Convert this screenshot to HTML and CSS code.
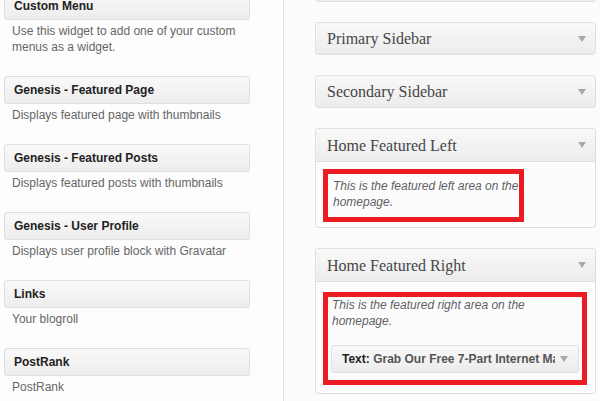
FILE: index.html
```html
<!DOCTYPE html>
<html>
<head>
<meta charset="utf-8">
<link rel="stylesheet" href="styles.css">
</head>
<body>
<div class="page">
  <div class="available">
    <div class="widget-list">
      <div class="avail-widget">
        <div class="avail-title">Custom Menu</div>
        <div class="avail-desc">Use this widget to add one of your custom menus as a widget.</div>
      </div>
      <div class="avail-widget">
        <div class="avail-title">Genesis - Featured Page</div>
        <div class="avail-desc">Displays featured page with thumbnails</div>
      </div>
      <div class="avail-widget">
        <div class="avail-title">Genesis - Featured Posts</div>
        <div class="avail-desc">Displays featured posts with thumbnails</div>
      </div>
      <div class="avail-widget">
        <div class="avail-title">Genesis - User Profile</div>
        <div class="avail-desc">Displays user profile block with Gravatar</div>
      </div>
      <div class="avail-widget">
        <div class="avail-title">Links</div>
        <div class="avail-desc">Your blogroll</div>
      </div>
      <div class="avail-widget">
        <div class="avail-title">PostRank</div>
        <div class="avail-desc">PostRank</div>
      </div>
    </div>
  </div>
  <div class="sidebars">
    <div class="sidebar-list">
      <div class="sidebar">
        <div class="sidebar-head"><span class="sidebar-name"></span><span class="arrow"></span></div>
      </div>
      <div class="sidebar">
        <div class="sidebar-head"><span class="sidebar-name">Primary Sidebar</span><span class="arrow"></span></div>
      </div>
      <div class="sidebar">
        <div class="sidebar-head"><span class="sidebar-name">Secondary Sidebar</span><span class="arrow"></span></div>
      </div>
      <div class="sidebar open">
        <div class="sidebar-head"><span class="sidebar-name">Home Featured Left</span><span class="arrow"></span></div>
        <div class="sidebar-body body-left">
          <div class="highlight highlight-left">
            <div class="sidebar-desc">This is the featured left area on the homepage.</div>
          </div>
        </div>
      </div>
      <div class="sidebar open">
        <div class="sidebar-head"><span class="sidebar-name">Home Featured Right</span><span class="arrow"></span></div>
        <div class="sidebar-body body-right">
          <div class="highlight highlight-right">
            <div class="sidebar-desc">This is the featured right area on the homepage.</div>
            <div class="placed-widget">
              <span class="placed-title"><b>Text:</b> <span class="in-title">Grab Our Free 7-Part Internet Marketing Course</span></span>
              <span class="arrow small"></span>
            </div>
          </div>
        </div>
      </div>
    </div>
  </div>
</div>
</body>
</html>
```

FILE: styles.css
```css
html, body {
  margin: 0;
  padding: 0;
  width: 600px;
  height: 401px;
  overflow: hidden;
  background: #fcfcfc;
  font-family: "Liberation Sans", Arial, sans-serif;
  font-size: 12px;
}

.page {
  display: flex;
  height: 401px;
}

.available {
  width: 284px;
  flex: none;
  background: #fdfdfd;
  border-right: 1px solid #e4e4e4;
  padding-left: 4px;
  box-sizing: border-box;
}

.widget-list {
  margin-top: -8px;
  width: 246px;
}

.avail-title {
  height: 26px;
  line-height: 27px;
  border: 1px solid #dfdfdf;
  border-radius: 3px;
  background: linear-gradient(to bottom, #f9f9f9, #ededed);
  padding-left: 9px;
  font-weight: bold;
  color: #222;
}

.avail-desc {
  margin: 3px 0 21px 8px;
  line-height: 16px;
  color: #666;
  padding-right: 10px;
}

.sidebars {
  flex: 1;
  min-width: 0;
  background: #fcfcfc;
  padding-left: 31px;
  padding-right: 4px;
}

.sidebar-list {
  margin-top: -31px;
  display: flex;
  flex-direction: column;
  gap: 20px;
}

.sidebar {
  border: 1px solid #dfdfdf;
  border-radius: 3px;
  background: #fcfcfc;
  overflow: hidden;
}

.sidebar-head {
  height: 31px;
  display: flex;
  align-items: center;
  justify-content: space-between;
  padding: 0 9px 0 11px;
  background: linear-gradient(to bottom, #f9f9f9, #ececec);
}

.open .sidebar-head {
  height: 32px;
  border-bottom: 1px solid #dfdfdf;
}

.sidebar-name {
  font-family: "Liberation Serif", "Times New Roman", serif;
  font-size: 16px;
  color: #464646;
  padding-top: 1px;
}

.arrow {
  width: 0;
  height: 0;
  border-left: 4px solid transparent;
  border-right: 4px solid transparent;
  border-top: 6px solid #a8a8a8;
  flex: none;
}

.sidebar-body {
  padding-left: 7px;
}

.body-left {
  padding-top: 7px;
  padding-bottom: 5px;
}

.body-right {
  padding-top: 10px;
  padding-bottom: 8px;
  padding-right: 8px;
}

.highlight {
  border: 5px solid #ec1c24;
  background: #fcfcfc;
}

.highlight-left {
  width: 186px;
  padding: 4px 0 7px 5px;
}

.highlight-right {
  padding: 0 3px 7px 3px;
}

.sidebar-desc {
  font-style: italic;
  color: #5f5f66;
  line-height: 16px;
}

.highlight-right .sidebar-desc {
  padding-left: 1px;
}

.placed-widget {
  margin-top: 16px;
  height: 26px;
  border: 1px solid #dfdfdf;
  border-radius: 3px;
  background: linear-gradient(to bottom, #f9f9f9, #ececec);
  display: flex;
  align-items: center;
  padding: 0 10px 0 10px;
  gap: 5px;
}

.placed-title {
  flex: 1;
  min-width: 0;
  white-space: nowrap;
  overflow: hidden;
  color: #222;
}

.in-title {
  font-weight: bold;
  color: #555;
}
```
